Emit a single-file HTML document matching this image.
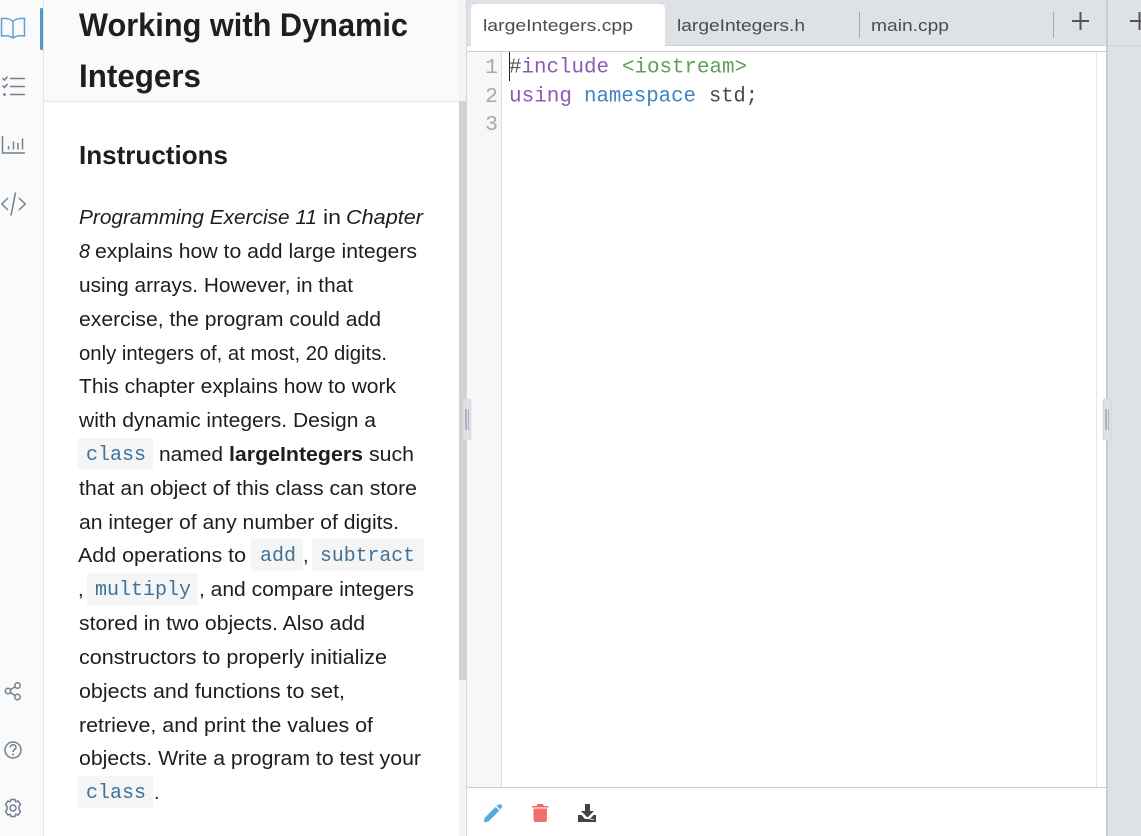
<!DOCTYPE html>
<html><head><meta charset="utf-8"><style>
html,body{margin:0;padding:0;width:1141px;height:836px;overflow:hidden;background:#fff}
svg{display:block}
text{font-family:"Liberation Sans",sans-serif;fill:#1e1e1e;font-size:20px}
.i{font-style:italic}
.b{font-weight:700}
.m{font-family:"Liberation Mono",monospace;font-size:20px;fill:#3f7299}
.c{font-family:"Liberation Mono",monospace;font-size:21px}
.t{font-size:17px;fill:#4c4c4c}
.n{font-family:"Liberation Mono",monospace;font-size:21px;fill:#aaa}
</style></head><body>
<svg width="1141" height="836" viewBox="0 0 1141 836" xmlns="http://www.w3.org/2000/svg">
<rect width="1141" height="836" fill="#fff"/>
<rect width="43" height="836" fill="#fafafa"/>
<rect x="43" width="1" height="836" fill="#e4e4e4"/>
<rect x="40" y="8" width="3" height="42" rx="1" fill="#4a9bd1"/>
<rect x="44" width="415" height="101" fill="#fafafa"/>
<rect x="44" y="101" width="415" height="1" fill="#e6e6e6"/>

<g fill="none" stroke="#5ba3d6" stroke-width="1.500">
<path d="M13 21.500C10 18.500 5 18 1.500 18.500V36C5 35.500 10 35.500 13 38C16 35.500 21 35.500 24.500 36V18.500C21 18 16 18.500 13 21.500ZM13 21.500V38"/>
</g>
<g fill="none" stroke="#708090" stroke-width="1.500">
<path d="M10 78.500H25M10 86.500H25M10 94.500H25"/>
<path d="M2.500 78L4.500 80L7.500 76.500M2.500 85.500L4.500 87.500L7.500 84"/>
<path d="M2.500 136V153H25"/>
<path d="M8.500 149.500V146M13.500 149.500V141.500M18 149.500V143M22.500 149.500V138.500"/>
<path d="M8 198L1.800 204L8 210M19 198L25.200 204L19 210M15.500 192.500L11 215.500"/>
<circle cx="8" cy="691" r="2.700"/><circle cx="17.500" cy="685.500" r="2.700"/><circle cx="17.500" cy="697" r="2.700"/>
<path d="M10.500 689.500L15 687M10.500 692.500L15 695.500"/>
<circle cx="13" cy="750" r="8"/>
<path d="M10.300 747.500C10.300 743.800 16 744 16 747.500C16 749.500 13 749.500 13 752"/>
<circle cx="13" cy="808" r="3"/>
<path d="M11 799.500H15L15.700 801.800L18 801L20.500 804.500L19 806.500V809.500L20.500 811.500L18 815L15.700 814.200L15 816.500H11L10.300 814.200L8 815L5.500 811.500L7 809.500V806.500L5.500 804.500L8 801L10.300 801.800Z"/>
</g>
<circle cx="13" cy="754.500" r="1" fill="#708090"/>
<circle cx="4.500" cy="94.500" r="1.400" fill="#708090"/>

<text class="b" x="79" y="36" style="font-size:32px" textLength="329" lengthAdjust="spacingAndGlyphs">Working with Dynamic</text>
<text class="b" x="79" y="87" style="font-size:32px" textLength="122" lengthAdjust="spacingAndGlyphs">Integers</text>
<text class="b" x="79" y="164" style="font-size:26px" textLength="149" lengthAdjust="spacingAndGlyphs">Instructions</text>

<text class="i" x="79" y="224" textLength="238" lengthAdjust="spacingAndGlyphs">Programming Exercise 11</text>
<text x="323" y="224" textLength="18" lengthAdjust="spacingAndGlyphs">in</text>
<text class="i" x="346" y="224" textLength="77" lengthAdjust="spacingAndGlyphs">Chapter</text>
<text class="i" x="79" y="258" textLength="11" lengthAdjust="spacingAndGlyphs">8</text>
<text x="95" y="258" textLength="322" lengthAdjust="spacingAndGlyphs">explains how to add large integers</text>
<text x="79" y="292" textLength="274" lengthAdjust="spacingAndGlyphs">using arrays. However, in that</text>
<text x="79" y="326" textLength="302" lengthAdjust="spacingAndGlyphs">exercise, the program could add</text>
<text x="79" y="360" textLength="308" lengthAdjust="spacingAndGlyphs">only integers of, at most, 20 digits.</text>
<text x="79" y="393" textLength="317" lengthAdjust="spacingAndGlyphs">This chapter explains how to work</text>
<text x="79" y="427" textLength="297" lengthAdjust="spacingAndGlyphs">with dynamic integers. Design a</text>

<rect x="78" y="438" width="75" height="31" fill="#f5f5f5"/>
<text class="m" x="86" y="460" textLength="60" lengthAdjust="spacingAndGlyphs">class</text>
<text x="159" y="461" textLength="64" lengthAdjust="spacingAndGlyphs">named</text>
<text class="b" x="229" y="461" textLength="134" lengthAdjust="spacingAndGlyphs">largeIntegers</text>
<text x="369" y="461" textLength="45" lengthAdjust="spacingAndGlyphs">such</text>
<text x="79" y="495" textLength="338" lengthAdjust="spacingAndGlyphs">that an object of this class can store</text>
<text x="79" y="529" textLength="320" lengthAdjust="spacingAndGlyphs">an integer of any number of digits.</text>
<text x="78" y="562" textLength="168" lengthAdjust="spacingAndGlyphs">Add operations to</text>
<rect x="251" y="539" width="52" height="32" fill="#f5f5f5"/>
<text class="m" x="260" y="561" textLength="36" lengthAdjust="spacingAndGlyphs">add</text>
<text x="303" y="562">,</text>
<rect x="312" y="539" width="112" height="32" fill="#f5f5f5"/>
<text class="m" x="320" y="561" textLength="95" lengthAdjust="spacingAndGlyphs">subtract</text>
<text x="78" y="596">,</text>
<rect x="87" y="573" width="111" height="32" fill="#f5f5f5"/>
<text class="m" x="95" y="595" textLength="96" lengthAdjust="spacingAndGlyphs">multiply</text>
<text x="199" y="596" textLength="215" lengthAdjust="spacingAndGlyphs">, and compare integers</text>
<text x="79" y="630" textLength="286" lengthAdjust="spacingAndGlyphs">stored in two objects. Also add</text>
<text x="79" y="664" textLength="308" lengthAdjust="spacingAndGlyphs">constructors to properly initialize</text>
<text x="79" y="698" textLength="266" lengthAdjust="spacingAndGlyphs">objects and functions to set,</text>
<text x="79" y="732" textLength="294" lengthAdjust="spacingAndGlyphs">retrieve, and print the values of</text>
<text x="79" y="765" textLength="342" lengthAdjust="spacingAndGlyphs">objects. Write a program to test your</text>
<rect x="78" y="776" width="75" height="32" fill="#f5f5f5"/>
<text class="m" x="86" y="798" textLength="60" lengthAdjust="spacingAndGlyphs">class</text>
<text x="154" y="799">.</text>

<rect x="459" y="0" width="8" height="836" fill="#f4f4f4"/>
<rect x="459" y="101" width="8" height="579" fill="#d2d2d2"/>
<rect x="466" y="0" width="1" height="836" fill="#d6d6d6"/>

<rect x="467" y="0" width="640" height="46" fill="#dee1e6"/>
<path d="M471 45V9Q471 4 476 4H660Q665 4 665 9V45Z" fill="#fff"/>
<rect x="467" y="45" width="640" height="1" fill="#cfd1d5"/>
<rect x="471" y="45" width="194" height="1" fill="#fff"/>
<rect x="467" y="46" width="640" height="5" fill="#fff"/>
<rect x="467" y="51" width="640" height="1" fill="#ccc"/>
<text class="t" x="483" y="31" textLength="150" lengthAdjust="spacingAndGlyphs">largeIntegers.cpp</text>
<text class="t" x="677" y="31" textLength="128" lengthAdjust="spacingAndGlyphs">largeIntegers.h</text>
<text class="t" x="871" y="31" textLength="78" lengthAdjust="spacingAndGlyphs">main.cpp</text>
<rect x="859" y="12" width="1" height="26" fill="#a8a8a8"/>
<rect x="1053" y="12" width="1" height="26" fill="#a8a8a8"/>
<path d="M1072 21H1089M1080.500 12V30" stroke="#555" stroke-width="2" fill="none"/>

<rect x="467" y="52" width="34" height="735" fill="#f7f7f7"/>
<rect x="501" y="52" width="1" height="735" fill="#ddd"/>
<rect x="1096" y="52" width="1" height="735" fill="#e6e6e6"/>
<text class="n" x="485" y="73" textLength="13" lengthAdjust="spacingAndGlyphs">1</text>
<text class="n" x="485" y="102" textLength="13" lengthAdjust="spacingAndGlyphs">2</text>
<text class="n" x="485" y="130" textLength="13" lengthAdjust="spacingAndGlyphs">3</text>
<rect x="509" y="52" width="1" height="29" fill="#222"/>
<text class="c" x="509" y="72.500" textLength="100" lengthAdjust="spacingAndGlyphs"><tspan fill="#555">#</tspan><tspan fill="#8a5bb5">include</tspan></text>
<text class="c" x="622" y="72.500" textLength="125" lengthAdjust="spacingAndGlyphs" style="fill:#5f9e58">&lt;iostream&gt;</text>
<text class="c" x="509" y="101.500" textLength="63" lengthAdjust="spacingAndGlyphs" style="fill:#8a5bb5">using</text>
<text class="c" x="584" y="101.500" textLength="112" lengthAdjust="spacingAndGlyphs" style="fill:#3f84c4">namespace</text>
<text class="c" x="709" y="101.500" textLength="49" lengthAdjust="spacingAndGlyphs" style="fill:#4a4a4a">std;</text>

<rect x="467" y="787" width="640" height="1" fill="#ccc"/>
<rect x="1106" y="0" width="2" height="836" fill="#cbcbcb"/>
<rect x="1108" y="0" width="33" height="836" fill="#dee1e6"/>
<rect x="1108" y="45" width="33" height="1" fill="#cfd1d5"/>
<path d="M1130 21H1141M1139.500 12V30" stroke="#555" stroke-width="2" fill="none"/>

<rect x="463" y="399" width="8" height="41" rx="2" fill="#dfe1e6" stroke="#d2d4d8" stroke-width=".6"/>
<rect x="465" y="409" width="2" height="21" fill="#b0b0b8"/><rect x="468" y="409" width="1" height="21" fill="#b0b0b8"/>
<rect x="1103" y="399" width="8" height="41" rx="2" fill="#dfe1e6" stroke="#c8cacf" stroke-width=".6"/>
<rect x="1105" y="409" width="2" height="21" fill="#b0b0b8"/><rect x="1108" y="409" width="1" height="21" fill="#b0b0b8"/>

<path d="M497 805.500L500 804Q502 804.500 502 807L500.500 809.500L496.500 806ZM495.500 807L499.500 810.500L488.500 821.500L484 822.500L484.500 818Z" fill="#5aa9de"/>
<path d="M532 806H536.500L537.500 804H543L544 806H548.500V807.500H532ZM533.500 808.500H547V819.500Q547 822 544.500 822H536Q533.500 822 533.500 819.500Z" fill="#f26d6d"/>
<path d="M585 804H590V811H594L587.500 817.500L581 811H585ZM578 815H581.500L585 819H590L593.500 815H596V822H578Z" fill="#444"/>
<rect x="590" y="819" width="4" height="1" fill="#bbb"/>
</svg>
</body></html>
